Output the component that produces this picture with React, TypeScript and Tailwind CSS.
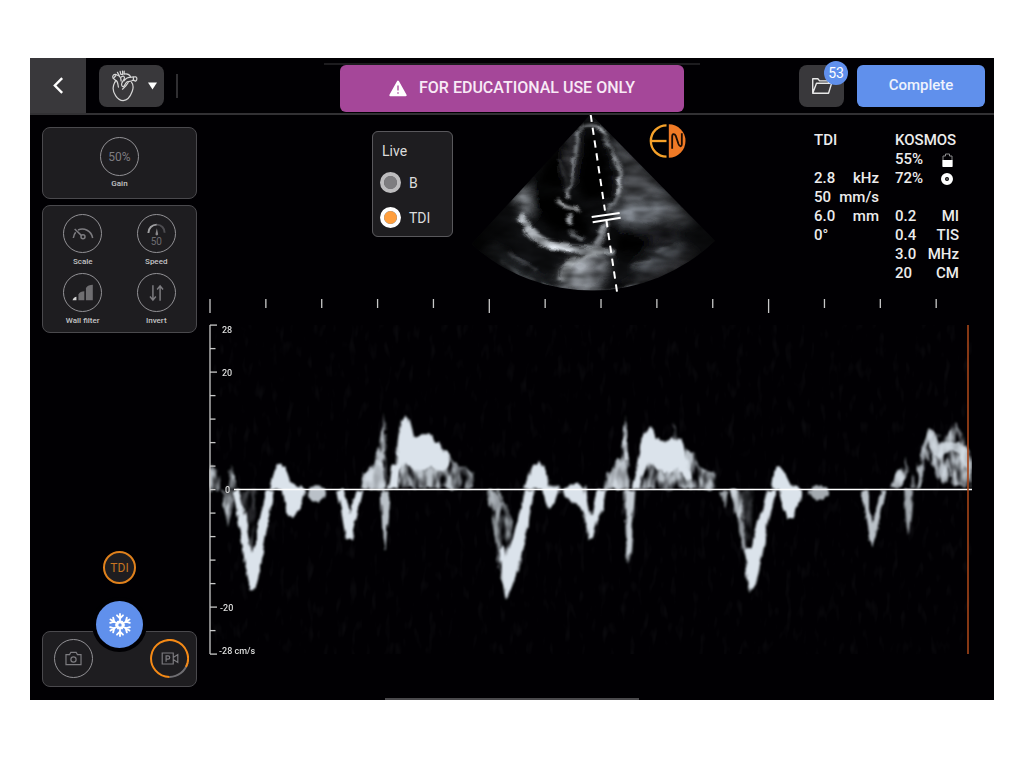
import React from "react";

const CIRCLE =
  "flex size-[39px] shrink-0 items-center justify-center rounded-full border border-[#929195] text-[#7d7c80]";
const CARD = "rounded-lg border border-[#4a494d] bg-[#1e1d20]";

function HeartIcon() {
  return (
    <svg viewBox="270 56 80 98" className="h-[33px] w-[27px]" fill="none" stroke="#d6d6d6" strokeWidth="3.6" strokeLinejoin="round" strokeLinecap="round" aria-hidden="true">
      <path d="M281 96C274 108 276 124 284 136C290 145 297 150 306 150C318 149 328 136 333 122C337 111 336 102 331 96" />
      <path d="M281 96L284 90L276 83C273 77 277 72 283 72L293 76C298 79 300 84 300 92" />
      <path d="M277 84L284 76M284 90C291 92 290 102 292 110" />
      <path d="M289 66L294 75M297 63L299 72L305 72L304 62M309 62L309 71C318 69 325 73 328 79" />
      <path d="M300 80C306 74 312 78 309 86L302 98C300 104 303 109 307 108C312 106 311 98 318 94C324 91 330 95 335 89L343 92C348 89 348 80 343 79L331 80C322 80 313 84 309 91" />
      <path d="M336 80L337 89M321 96C317 104 313 108 304 116" />
    </svg>
  );
}

function FolderIcon() {
  return (
    <svg viewBox="96 80 64 52" className="h-[18px] w-[22px]" fill="none" stroke="#e8e8e8" strokeWidth="4" strokeLinejoin="round" aria-hidden="true">
      <path d="M101 127V85H116L121 91H147V97M101 127L112 98H156L147 127Z" />
    </svg>
  );
}

function GaugeIcon() {
  return (
    <svg viewBox="0 0 66 40" className="h-[14px] w-[22px]" fill="none" stroke="currentColor" strokeWidth="4.5" aria-hidden="true">
      <path d="M4 32C5 25 7 20 11 15M18 8C36 0 58 10 62 32" />
      <path d="M8 5L28 24" />
      <circle cx="33" cy="28" r="6" />
    </svg>
  );
}

function SpeedIcon() {
  return (
    <svg viewBox="0 0 58 40" className="h-[13px] w-[19px]" fill="none" aria-hidden="true">
      <path d="M4 31C4 16 15 5 30 5" stroke="#a0a0a2" strokeWidth="6" />
      <path d="M30 5C44 5 54 16 54 30" stroke="#4d4c50" strokeWidth="6" />
      <path d="M30 16L34 34C34 40 26 40 26 34Z" fill="#8a898c" />
    </svg>
  );
}

function WallFilterIcon() {
  return (
    <svg viewBox="128 250 66 52" className="h-[17px] w-[22px]" aria-hidden="true">
      <path d="M129 300C131 293 136 289 141 289V300Z" fill="#d5d5d5" />
      <path d="M147 300V282C150 275 157 272 165 272V300Z" fill="#6f6e71" />
      <path d="M170 300V262C174 255 182 252 191 252V300Z" fill="#6f6e71" />
    </svg>
  );
}

function InvertIcon() {
  return (
    <svg viewBox="0 0 46 54" className="h-[18px] w-[15px]" fill="none" stroke="currentColor" strokeWidth="4.5" aria-hidden="true">
      <path d="M12 3V48M3 38L12 49L21 38M34 51V6M25 16L34 5L43 16" />
    </svg>
  );
}

function CameraIcon() {
  return (
    <svg viewBox="0 0 52 44" className="h-[15px] w-[17px]" fill="none" stroke="currentColor" strokeWidth="3.6" aria-hidden="true">
      <path d="M3 10H14L18 3H34L38 10H49V41H3Z" />
      <circle cx="26" cy="25" r="8" />
    </svg>
  );
}

function ClipIcon() {
  return (
    <svg viewBox="0 0 54 40" className="h-[13px] w-[18px]" fill="none" stroke="#7d7c80" strokeWidth="3.6" aria-hidden="true">
      <path d="M3 3H37V37H3ZM37 17L51 8V32L37 23" />
      <path d="M15 30V12H21C28 12 28 22 21 22H15" />
    </svg>
  );
}

function SnowflakeIcon() {
  return (
    <svg viewBox="-36 -36 72 72" className="size-6" fill="none" stroke="#fff" strokeWidth="5.5" strokeLinecap="round" aria-hidden="true">
      {[0, 60, 120, 180, 240, 300].map((a) => (
        <path key={a} transform={`rotate(${a})`} d="M0 -7V-33M-9 -29L0 -20L9 -29M-6 -10L0 -7L6 -10" />
      ))}
    </svg>
  );
}

function Tool({ label, children }: { label: string; children: React.ReactNode }) {
  return (
    <button type="button" className="flex flex-col items-center gap-[3px]">
      <span className={CIRCLE}>{children}</span>
      <span className="text-[8px] leading-3 font-medium text-[#c4c4c6]">{label}</span>
    </button>
  );
}

function Sector() {
  return (
    <svg viewBox="0 15 780 543" className="w-full" role="img" aria-label="Apical ultrasound view">
      <defs>
        <clipPath id="fan">
          <path d="M362 12L735 392A533 533 0 0 1 5 402Z" />
        </clipPath>
        <linearGradient id="fade" x1="0" x2="1" y1="0" y2="0">
          <stop offset="0" stopColor="#000" stopOpacity="0.9" />
          <stop offset="0.2" stopColor="#000" stopOpacity="0" />
          <stop offset="0.8" stopColor="#000" stopOpacity="0" />
          <stop offset="1" stopColor="#000" stopOpacity="0.7" />
        </linearGradient>
        <filter id="speckle" x="0" y="0" width="780" height="570" filterUnits="userSpaceOnUse" colorInterpolationFilters="sRGB">
          <feTurbulence type="fractalNoise" baseFrequency="0.016 0.035" numOctaves="2" seed="8" result="n" />
          <feDisplacementMap in="SourceGraphic" in2="n" scale="22" xChannelSelector="R" yChannelSelector="G" result="d" />
          <feColorMatrix in="n" values="1.4 0 0 0 -0.1  1.4 0 0 0 -0.1  1.4 0 0 0 -0.1  0 0 0 0 1" result="g" />
          <feComposite in="d" in2="g" operator="arithmetic" k1="0.8" k2="0.4" />
          <feGaussianBlur stdDeviation="2" />
        </filter>
        <filter id="b4" x="-50%" y="-50%" width="200%" height="200%"><feGaussianBlur stdDeviation="5" /></filter>
        <filter id="b12" x="-50%" y="-50%" width="200%" height="200%"><feGaussianBlur stdDeviation="14" /></filter>
      </defs>
      <g clipPath="url(#fan)">
        <g filter="url(#speckle)">
          <rect width="780" height="570" fill="#0f1012" />
          <g filter="url(#b12)">
            <path d="M375 20L540 190L680 340L600 340L520 350L440 320L455 200L420 80Z" fill="#484b50" />
            <path d="M420 290L560 260L600 310L500 350L430 330Z" fill="#70757b" />
            <path d="M120 250L170 215L185 300L165 330Z" fill="#858a90" />
            <path d="M300 70L325 60L305 230L275 190Z" fill="#3c3e42" />
            <path d="M270 545L265 490L330 430L400 425L420 470L380 550Z" fill="#8d9298" />
            <path d="M450 380L640 350L600 400L480 440Z" fill="#202225" />
            <path d="M490 470L620 390L650 420L520 500Z" fill="#4c4f54" />
            <path d="M60 400L160 470L260 540L180 530L40 440Z" fill="#2b2d30" />
            <path d="M440 540L660 420L690 440L560 520Z" fill="#303236" />
            <path d="M180 240L270 250L350 300L360 380L250 370L190 310Z" fill="#000" />
            <path d="M230 140L290 100L280 240L190 230Z" fill="#000" />
            <path d="M345 70L385 75L425 190L415 270L340 275L318 220L330 120Z" fill="#000" />
            <path d="M435 360L560 385L500 440L440 440Z" fill="#000" />
            <path d="M365 450L395 450L390 520L370 520Z" fill="#2a2c2f" />
          </g>
          <g filter="url(#b4)" fill="none" strokeLinecap="round">
            <path d="M158 322C180 370 215 395 260 410C310 420 350 415 425 425" stroke="#b4bac0" strokeWidth="20" />
            <path d="M175 360C205 395 240 408 300 416" stroke="#ccd2d8" strokeWidth="24" />
            <path d="M275 500C290 460 330 430 390 425" stroke="#a5aaaf" strokeWidth="22" />
            <path d="M330 52C318 100 312 160 298 240" stroke="#8c9196" strokeWidth="10" />
            <path d="M335 48C355 40 390 42 405 70" stroke="#b9bec3" strokeWidth="9" />
            <path d="M402 75C425 120 455 170 450 225C446 260 430 290 410 300" stroke="#7b8085" strokeWidth="11" />
            <path d="M430 140C450 170 456 210 448 250" stroke="#a9aeb3" strokeWidth="11" />
            <path d="M262 272C285 292 305 294 325 296" stroke="#e8ecf0" strokeWidth="9" />
            <path d="M300 318V336" stroke="#a5a9ae" strokeWidth="16" />
            <path d="M294 252V260" stroke="#a5a9ae" strokeWidth="11" />
            <path d="M408 345C400 370 388 385 380 402" stroke="#8c9095" strokeWidth="20" />
            <path d="M265 150C272 180 285 210 290 240" stroke="#4b4e52" strokeWidth="7" />
            <path d="M300 370L340 385" stroke="#777b80" strokeWidth="10" />
            <path d="M290 450L340 430" stroke="#222" strokeWidth="10" />
            <path d="M490 465L545 450M560 430L610 400M90 455L190 515M120 430L200 480" stroke="#5d6166" strokeWidth="6" />
            <path d="M220 530C300 548 420 552 500 525" stroke="#6d7176" strokeWidth="9" />
          </g>
        </g>
        <rect width="780" height="570" fill="url(#fade)" />
      </g>
      <path d="M362 14L405 302" stroke="#fff" strokeWidth="6" strokeDasharray="22 17" />
      <path d="M409 330L441 545" stroke="#fff" strokeWidth="6" strokeDasharray="22 17" />
      <path d="M365 321L449 309M368 337L452 323" stroke="#fff" strokeWidth="6" />
    </svg>
  );
}

function BrandMark() {
  return (
    <svg viewBox="0 0 110 102" className="h-[34px] w-[37px]" role="img" aria-label="EchoNous">
      <path d="M52 4A47 47 0 0 0 52 98" fill="none" stroke="#f6a12a" strokeWidth="7" />
      <path d="M4 51H52" stroke="#f6a12a" strokeWidth="7" />
      <path d="M59 1A50 50 0 0 1 59 101Z" fill="#f07a26" />
      <path d="M69 74V38C69 28 76 28 80 36L88 60C92 70 98 68 98 60V28" fill="none" stroke="#1b0d05" strokeWidth="5.5" />
    </svg>
  );
}

const TIME_TICKS = Array.from({ length: 14 }, (_, i) => i);
const VELOCITY_TICKS = Array.from({ length: 15 }, (_, i) => i - 7);

function Spectrum() {
  return (
    <svg viewBox="209 296 763 362" className="block w-full" role="img" aria-label="Tissue Doppler velocity trace">
      <defs>
        <filter id="ragged" x="209" y="320" width="770" height="340" filterUnits="userSpaceOnUse" colorInterpolationFilters="sRGB">
          <feTurbulence type="fractalNoise" baseFrequency="0.2 0.06" numOctaves="2" seed="4" result="n" />
          <feDisplacementMap in="SourceGraphic" in2="n" scale="6" xChannelSelector="R" yChannelSelector="G" />
          <feGaussianBlur stdDeviation="1.2" />
        </filter>
        <filter id="mottled" x="209" y="320" width="770" height="340" filterUnits="userSpaceOnUse" colorInterpolationFilters="sRGB">
          <feTurbulence type="fractalNoise" baseFrequency="0.15 0.06" numOctaves="2" seed="9" result="n" />
          <feColorMatrix in="n" values="0 0 0 0 1  0 0 0 0 1  0 0 0 0 1  2.6 0 0 0 -0.7" result="m" />
          <feDisplacementMap in="SourceGraphic" in2="n" scale="8" xChannelSelector="R" yChannelSelector="G" result="d" />
          <feComposite in="d" in2="m" operator="in" />
          <feGaussianBlur stdDeviation="1.3" />
        </filter>
        <filter id="floor" x="209" y="325" width="763" height="329" filterUnits="userSpaceOnUse" colorInterpolationFilters="sRGB">
          <feTurbulence type="fractalNoise" baseFrequency="0.14 0.05" numOctaves="2" seed="2" />
          <feColorMatrix values="0 0 0 0 0.5  0 0 0 0 0.52  0 0 0 0 0.55  1.4 0 0 0 -0.8" />
        </filter>
      </defs>
      <rect x="209" y="325" width="763" height="329" filter="url(#floor)" opacity="0.16" />

      <g filter="url(#mottled)" fill="#b9c0c7">
        <g transform="translate(200 290) scale(.3333)">
          <path d="M30 520L48 535L62 575V598H30ZM82 598L92 525L108 560V598ZM66 600H110L98 650L84 710L72 660Z" />
          <path d="M105 600H170L165 700L160 800L135 760Z" opacity=".35" />
          <path d="M488 596L492 550L515 530L530 500L545 420L548 365L556 400L560 596ZM590 596L610 500L740 480L775 530L805 530L820 550V596Z" />
        </g>
        <g transform="translate(470 290) scale(.3333)">
          <path d="M48 600H90L130 700L120 760L106 900L90 840L70 690Z" opacity=".8" />
          <path d="M400 596L410 555L430 530L455 500L462 420L466 375L474 440L480 596ZM508 596L520 510L640 470L670 490L690 535L735 545V596ZM-6 540L8 548V590H-6ZM750 600H778L765 660ZM610 460L612 395L622 460Z" />
          <path d="M782 600H815L825 690L800 680Z" />
        </g>
        <g transform="translate(730 290) scale(.3333)">
          <path d="M20 600H70L60 830L40 760Z" opacity=".3" />
          <path d="M560 596L572 480L600 415L640 445L680 395L700 445L725 510V590L700 590L640 575L620 540L600 520L585 500L575 596ZM545 590L545 540L558 590Z" />
          <path d="M485 590L495 550L515 535L528 500L535 550L512 596Z" />
        </g>
      </g>

      <g filter="url(#ragged)" fill="#dbe3eb">
        <g transform="translate(200 290) scale(.3333)">
          <path d="M98 600H118L140 700L156 790L172 720L200 600H222L205 690L190 780L180 845L166 898H150L135 820L120 720Z" />
          <path d="M210 596L222 550L238 518L255 530L270 575L290 586L316 594L310 630L290 670L275 688L260 665L248 600Z" />
          <ellipse cx="351" cy="611" rx="27" ry="25" opacity=".85" />
          <path d="M412 600H432L447 672L470 600H490L480 645L464 715L456 748H438L428 690Z" />
          <path d="M490 596L496 556L520 532L536 510L548 520L555 596Z" opacity=".75" />
          <path d="M542 600H570L564 680L556 790L548 740Z" opacity=".85" />
          <path d="M566 596L576 530L588 520L594 440L608 390L618 375L630 395L642 440L660 435L690 430L702 455L718 455L732 485L742 490L748 520L730 545L712 540L690 530L668 540L648 545L630 528L610 520L600 545L590 596Z" />
        </g>
        <g transform="translate(470 290) scale(.3333)">
          <path d="M165 600H194L178 680L162 750L147 840L125 890L108 930L96 870L88 780L100 760L108 800L132 730Z" />
          <path d="M56 600L74 610L98 640L80 690Z" opacity=".6" />
          <path d="M158 596L172 570L190 525L205 517L225 530L238 588L268 588V605L255 640L238 657L225 625L212 598Z" />
          <path d="M278 600L295 585L320 580L345 590L356 645L364 680L380 600H408L398 650L380 695L370 740L360 748L350 705L340 668L318 640L285 622Z" />
          <path d="M408 594L418 555L445 520L465 505L474 596Z" opacity=".65" />
          <path d="M463 600H496L490 680L483 780L476 822L469 760ZM463 510L466 390L474 510Z" opacity=".9" />
          <path d="M482 596L500 540L510 480L522 430L540 412L560 442L590 458L612 442L630 450L642 478L656 510L662 572L640 560L620 536L600 548L580 548L560 538L545 520L530 525L520 550L508 596Z" />
        </g>
        <g transform="translate(730 290) scale(.3333)">
          <path d="M112 600H138L116 700L96 800L77 885L60 912L50 850L46 780L62 770L80 710Z" />
          <path d="M2 600H20L52 780L48 820L26 720Z" opacity=".65" />
          <path d="M126 596L133 540L148 528L165 550L182 585L216 594L210 635L190 685H170L155 640L146 600Z" />
          <ellipse cx="266" cy="607" rx="29" ry="22" opacity=".75" />
          <path d="M393 600H411L428 700L452 600H471L455 660L436 740L425 775L415 735Z" opacity=".85" />
          <path d="M487 590L497 553L515 542L526 560L510 594Z" opacity=".65" />
          <path d="M523 600H549L542 680L535 738L528 690Z" opacity=".75" />
          <path d="M598 425L612 425L624 465L640 455L662 455L690 455L712 480L724 520V585L712 550L690 495L660 480L630 500L612 500L600 470Z" opacity=".8" />
          <path d="M570 590L578 490L600 432M610 500L628 565M640 560L652 510L668 560" fill="none" stroke="#dbe3eb" strokeWidth="9" opacity=".6" />
        </g>
      </g>

      <path d="M234 489.500H972" stroke="#fff" strokeWidth="1.6" />
      <path d="M968 325V654" stroke="#a8461a" strokeWidth="1.6" />
      <g stroke="#c9c9c9" strokeWidth="1.300">
        {TIME_TICKS.map((i) => (
          <path key={i} d={`M${210 + i * 55.86} 299V${i % 5 === 0 ? 313 : 308}`} />
        ))}
        <path d="M210 325V654" />
        {VELOCITY_TICKS.map((i) => (
          <path key={i} d={`M210 ${489.6 + i * 23.5}h${Math.abs(i) === 7 || Math.abs(i) === 5 ? 7 : 5.5}`} />
        ))}
      </g>
      <g fill="#dcdcdc" fontSize="9" fontFamily="Roboto, sans-serif" fontWeight="500">
        <text x="222" y="333">28</text>
        <text x="222" y="376">20</text>
        <text x="225" y="493">0</text>
        <text x="220" y="611">-20</text>
        <text x="219" y="654">-28 cm/s</text>
      </g>
    </svg>
  );
}

const DOPPLER = [
  ["2.8", "kHz"],
  ["50", "mm/s"],
  ["6.0", "mm"],
  ["0°", ""],
];
const OUTPUT = [
  ["0.2", "MI"],
  ["0.4", "TIS"],
  ["3.0", "MHz"],
  ["20", "CM"],
];

function Rows({ rows }: { rows: string[][] }) {
  return (
    <tbody>
      {rows.map(([value, unit]) => (
        <tr key={value}>
          <td className="p-0">{value}</td>
          <td className="p-0 text-right">{unit}</td>
        </tr>
      ))}
    </tbody>
  );
}

export default function App() {
  return (
    <div className="flex min-h-screen flex-col bg-white px-[30px] pt-[58px] pb-[66px] font-[Roboto,sans-serif]">
      <div className="relative flex flex-1 flex-col bg-[#010003] text-[#ececec]">
        <header className="flex h-[57px] items-stretch border-b-2 border-[#323134]">
          <button type="button" aria-label="Back" className="flex w-14 items-center justify-center bg-[#39383b]">
            <svg viewBox="0 0 12 18" className="h-[17px] w-[11px]" fill="none" stroke="#fff" strokeWidth="2.6" aria-hidden="true">
              <path d="M10 1L2 9L10 17" />
            </svg>
          </button>
          <div className="flex flex-1 items-center pr-[9px]">
            <button type="button" aria-label="Cardiac preset" className="ml-[13px] flex h-[42px] w-[65px] items-center justify-center gap-2.5 rounded-lg bg-[#39383b] pl-1">
              <HeartIcon />
              <svg viewBox="0 0 10 8" className="h-2 w-[9px]" aria-hidden="true">
                <path d="M0 0H10L5 8Z" fill="#fff" />
              </svg>
            </button>
            <span className="ml-3 h-6 w-0.5 bg-[#302f32]" />
            <div className="flex flex-1 justify-end pt-[3px]">
              <div className="border-t-2 border-[#1d1c1f] px-4">
                <div role="status" className="flex h-[47px] w-[344px] items-center justify-center gap-3 rounded-md bg-[#a54799] text-base font-medium text-[#f8eaf6]">
                  <svg viewBox="0 0 54 50" className="h-[17px] w-[18px]" aria-hidden="true">
                    <path d="M27 4L50 45H4Z" fill="#fff" stroke="#fff" strokeWidth="6" strokeLinejoin="round" />
                    <path d="M27 16V31M27 36V41" stroke="#a54799" strokeWidth="4" />
                  </svg>
                  FOR EDUCATIONAL USE ONLY
                </div>
              </div>
            </div>
            <button type="button" aria-label="Review files, 53" className="relative ml-[99px] flex h-[42px] w-[45px] items-center justify-center rounded-lg bg-[#39383b]">
              <FolderIcon />
              <span className="absolute -top-1 -right-1 flex size-6 items-center justify-center rounded-full bg-[#6090ec] text-sm text-white">
                53
              </span>
            </button>
            <button type="button" className="ml-[13px] h-[42px] w-32 rounded-md bg-[#6090ec] text-[15px] font-medium text-[#eef3fd]">
              Complete
            </button>
          </div>
        </header>

        <div className="flex flex-1">
          <aside className="flex w-[167px] shrink-0 flex-col pt-3 pb-[13px] pl-3">
            <div className={`${CARD} flex h-[72px] justify-center pt-[9px]`}>
              <button type="button" className="flex flex-col items-center gap-0.5">
                <span className={`${CIRCLE} text-xs`}>50%</span>
                <span className="text-[8px] leading-3 font-medium text-[#c4c4c6]">Gain</span>
              </button>
            </div>
            <div className={`${CARD} mt-1.5 grid h-32 grid-cols-2 content-start gap-y-[5px] px-[3px] pt-2`}>
              <Tool label="Scale"><GaugeIcon /></Tool>
              <Tool label="Speed">
                <span className="flex flex-col items-center pt-1">
                  <SpeedIcon />
                  <span className="text-[10px] leading-3 text-[#6d6c70]">50</span>
                </span>
              </Tool>
              <Tool label="Wall filter"><WallFilterIcon /></Tool>
              <Tool label="Invert"><InvertIcon /></Tool>
            </div>

            <div className="mt-auto flex flex-col items-center">
              <button type="button" className="size-[33px] rounded-full border-2 border-[#e0811c] bg-[#1e1d20] text-xs text-[#c87420]">
                TDI
              </button>
              <button type="button" aria-label="Freeze" className="relative mt-[17px] flex size-[47px] items-center justify-center rounded-full bg-[#6090ec] ring-4 ring-[#010003]">
                <SnowflakeIcon />
              </button>
              <div className={`${CARD} -mt-[17px] flex h-14 w-full items-center justify-between pr-[7px] pb-0.5 pl-[11px]`}>
                <button type="button" aria-label="Capture image" className={CIRCLE}>
                  <CameraIcon />
                </button>
                <button type="button" aria-label="Capture clip" className="relative flex size-[39px] items-center justify-center">
                  <svg viewBox="0 0 39 39" className="absolute inset-0 size-[39px]" fill="none" strokeWidth="2" aria-hidden="true">
                    <path d="M37.400 24A18.500 18.500 0 0 1 19.500 38" stroke="#6f6e72" />
                    <path d="M19.500 38A18.500 18.500 0 1 1 36 28" stroke="#f58a16" />
                  </svg>
                  <ClipIcon />
                </button>
              </div>
            </div>
          </aside>

          <main className="mr-[22px] ml-3 min-w-0 flex-1">
            <div className="flex items-start">
              <fieldset className="mt-4 ml-[163px] flex h-[106px] w-[81px] shrink-0 flex-col rounded-md border border-[#59585c] bg-[#1e1d20] pl-[7px] text-sm text-[#dcdcdc]">
                <legend className="float-left mt-[9px] mb-1 pl-0.5 leading-5">Live</legend>
                <label className="clear-both flex h-[35px] items-center gap-2">
                  <input type="radio" name="live" className="size-[21px] appearance-none rounded-full border-4 border-[#bdbcbe] bg-[#7e7d80] bg-clip-padding checked:border-white checked:bg-[#ff9f3e]" />
                  B
                </label>
                <label className="flex h-[35px] items-center gap-2">
                  <input type="radio" name="live" defaultChecked className="size-[21px] appearance-none rounded-full border-4 border-[#bdbcbe] bg-[#7e7d80] bg-clip-padding checked:border-white checked:bg-[#ff9f3e]" />
                  TDI
                </label>
              </fieldset>
              <div className="relative ml-[17px] w-[260px] shrink-0">
                <Sector />
                <div className="absolute top-[9px] right-11">
                  <BrandMark />
                </div>
              </div>
              <div className="mt-4 mr-[13px] ml-auto flex items-start gap-4 text-[15px] leading-[19px] font-medium">
                <table className="w-[65px] border-collapse">
                  <thead>
                    <tr><th colSpan={2} className="p-0 pb-[19px] text-left font-medium">TDI</th></tr>
                  </thead>
                  <Rows rows={DOPPLER} />
                </table>
                <div className="w-16">
                  <p>KOSMOS</p>
                  <p className="flex items-center justify-between pr-1.5">
                    55%
                    <svg viewBox="0 0 11 14" className="h-3.5 w-[11px]" aria-label="Battery" role="img">
                      <path d="M1 13V3H3.500V1H7.500V3H10V13Z" fill="none" stroke="#8d8d8f" />
                      <path d="M.5 7H10.500V14H.5Z" fill="#fff" />
                    </svg>
                  </p>
                  <p className="flex items-center justify-between pr-1.5">
                    72%
                    <svg viewBox="0 0 12 12" className="size-3" aria-label="Storage" role="img">
                      <circle cx="6" cy="6" r="4" fill="none" stroke="#fff" strokeWidth="4" />
                      <circle cx="6" cy="6" r=".8" fill="#bbb" />
                    </svg>
                  </p>
                  <table className="mt-[19px] w-full border-collapse">
                    <Rows rows={OUTPUT} />
                  </table>
                </div>
              </div>
            </div>
            <Spectrum />
          </main>
        </div>
        <div className="absolute bottom-0 left-1/2 h-0.5 w-[254px] -translate-x-1/2 bg-[#4a494c]" />
      </div>
    </div>
  );
}
